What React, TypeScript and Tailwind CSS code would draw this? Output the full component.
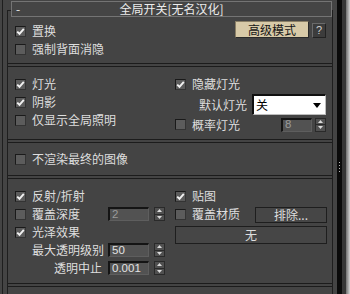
import React from "react";

const Check = ({ checked }: { checked?: boolean }) => (
  <div className="flex h-[11px] w-[11px] shrink-0 items-center justify-center border border-t-[#1a1a1a] border-l-[#1a1a1a] border-r-[#343434] border-b-[#343434] bg-[#5c5c5c]">
    {checked && (
      <svg width="9" height="9" viewBox="0 0 9 9">
        <path d="M1.2 4.6 L3.5 6.8 L7.8 1.8" stroke="#f2f2f2" strokeWidth="1.9" fill="none" />
      </svg>
    )}
  </div>
);

const CheckRow = ({ label, checked }: { label: string; checked?: boolean }) => (
  <div className="flex h-[18px] items-center gap-[6px]">
    <Check checked={checked} />
    <span className="leading-none">{label}</span>
  </div>
);

const Arrows = () => (
  <div className="flex h-[14px] w-[11px] shrink-0 flex-col border border-[#2a2a2a] bg-[#505050]">
    <div className="flex flex-1 items-center justify-center border-b border-[#2a2a2a]">
      <svg width="5" height="3" viewBox="0 0 5 3">
        <path d="M0 3 L2.5 0 L5 3Z" fill="#dadada" />
      </svg>
    </div>
    <div className="flex flex-1 items-center justify-center">
      <svg width="5" height="3" viewBox="0 0 5 3">
        <path d="M0 0 L5 0 L2.5 3Z" fill="#dadada" />
      </svg>
    </div>
  </div>
);

const Field = ({ value, wide, dim }: { value: string; wide?: boolean; dim?: boolean }) => (
  <div
    className={
      (wide ? "w-[41px] " : "w-[31px] ") +
      "flex h-[14px] items-center border-t-2 border-l-2 border-r border-b border-t-[#141414] border-l-[#141414] border-r-[#5e5e5e] border-b-[#5e5e5e] bg-[#525252] pl-[2px] font-['Liberation_Sans',sans-serif] text-[11.5px] leading-none " +
      (dim ? "text-[#9a9a9a]" : "text-[#e2e2e2]")
    }
  >
    {value}
  </div>
);

const Sep = () => <div className="h-[4px] shrink-0 border-y border-[#1c1c1c]" />;

export default function App() {
  return (
    <div className="flex h-[294px] w-[350px] overflow-hidden bg-[#444444] font-['Noto_Sans_CJK_SC',sans-serif] text-[12px] text-[#dedede]">
      <div className="w-[2px]" />
      <div className="w-px bg-[#1e1e1e]" />
      <div className="w-[4px]" />
      {/* panel */}
      <div className="flex w-[326px] flex-col">
        {/* title row */}
        <div className="flex h-[17px] shrink-0">
          <div className="h-[7px] w-[4px] self-end border-l border-t border-[#1e1e1e]" />
          <div className="mt-[1px] flex h-[16px] w-[321px] items-center border border-[#747474] bg-[#454545] text-[#ececec]">
            <div className="w-[14px] pl-[4px] leading-none">-</div>
            <div className="flex-1 text-center leading-none">全局开关[无名汉化]</div>
            <div className="w-[14px]" />
          </div>
          <div className="h-[7px] w-px self-end bg-[#1e1e1e]" />
        </div>
        {/* body */}
        <div className="flex flex-1 flex-col border-x border-[#1e1e1e]">
          {/* section 1 */}
          <div className="flex h-[46px] shrink-0 justify-between">
            <div className="flex flex-col pl-[7px] pt-[5px]">
              <CheckRow label="置换" checked />
              <CheckRow label="强制背面消隐" />
            </div>
            <div className="flex items-end gap-[3px] pr-[6px] pt-[4px] self-start">
              <div className="flex h-[17px] w-[74px] items-center justify-center border border-[#8a7f66] border-r-[#2a2a2a] border-b-[#2a2a2a] bg-[#d8caa8] leading-none text-[#151515]">
                高级模式
              </div>
              <div className="flex h-[15px] w-[14px] items-center justify-center border border-t-[#6a6a6a] border-l-[#6a6a6a] border-r-[#222] border-b-[#222] bg-[#3c3c3c] font-['Liberation_Sans',sans-serif] text-[11px] leading-none text-[#cfcfcf]">
                ?
              </div>
            </div>
          </div>
          <Sep />
          {/* section 2 */}
          <div className="flex h-[72px] shrink-0">
            <div className="flex w-[167px] flex-col pl-[7px] pt-[8px]">
              <CheckRow label="灯光" checked />
              <CheckRow label="阴影" checked />
              <CheckRow label="仅显示全局照明" />
            </div>
            <div className="flex flex-1 flex-col pt-[8px] pr-[6px]">
              <CheckRow label="隐藏灯光" checked />
              <div className="mt-[1px] flex h-[21px] items-center justify-end gap-[5px]">
                <span className="leading-none">默认灯光</span>
                <div className="flex h-[21px] w-[74px] items-center justify-between border-t-2 border-l-2 border-r border-b border-t-[#101010] border-l-[#101010] border-r-[#bdbdbd] border-b-[#bdbdbd] bg-white pl-[2px] pr-[4px] leading-none text-black">
                  <span>关</span>
                  <svg width="8" height="5" viewBox="0 0 8 5">
                    <path d="M0 0 L8 0 L4 5Z" fill="#000" />
                  </svg>
                </div>
              </div>
              <div className="mt-[2px] flex h-[15px] items-center">
                <div className="flex items-center gap-[6px]">
                  <Check />
                  <span className="leading-none">概率灯光</span>
                </div>
                <div className="ml-auto flex items-center gap-[3px]">
                  <Field value="8" dim />
                  <Arrows />
                </div>
              </div>
            </div>
          </div>
          <Sep />
          {/* section 3 */}
          <div className="flex h-[32px] shrink-0 flex-col pl-[7px] pt-[7px]">
            <CheckRow label="不渲染最终的图像" />
          </div>
          <Sep />
          {/* section 4 */}
          <div className="flex h-[104px] shrink-0">
            <div className="flex w-[167px] flex-col pl-[7px] pt-[8px]">
              <CheckRow label="反射/折射" checked />
              <div className="flex h-[18px] items-center">
                <div className="flex w-[93px] items-center gap-[6px]">
                  <Check />
                  <span className="leading-none">覆盖深度</span>
                </div>
                <Field value="2" wide dim />
                <div className="w-[5px]" />
                <Arrows />
              </div>
              <CheckRow label="光泽效果" checked />
              <div className="flex h-[18px] items-center">
                <div className="flex w-[93px] justify-end pr-[4px] leading-none">最大透明级别</div>
                <Field value="50" wide />
                <div className="w-[5px]" />
                <Arrows />
              </div>
              <div className="flex h-[18px] items-center">
                <div className="flex w-[93px] justify-end pr-[6px] leading-none">透明中止</div>
                <Field value="0.001" wide />
                <div className="w-[5px]" />
                <Arrows />
              </div>
            </div>
            <div className="flex flex-1 flex-col pr-[5px] pt-[8px]">
              <CheckRow label="贴图" checked />
              <div className="flex h-[18px] items-center">
                <div className="flex items-center gap-[6px]">
                  <Check />
                  <span className="leading-none">覆盖材质</span>
                </div>
                <div className="ml-auto mt-[2px] flex h-[16px] w-[72px] items-center justify-center border border-[#1e1e1e] bg-[#464646] leading-none">
                  排除...
                </div>
              </div>
              <div className="mt-[3px] flex h-[18px] items-center justify-center border border-[#1e1e1e] bg-[#464646] leading-none">
                无
              </div>
            </div>
          </div>
          <Sep />
          <div className="flex-1" />
        </div>
      </div>
      <div className="w-[4px]" />
      <div className="flex w-[5px] flex-col items-center gap-[2px] bg-[#0a0a0a] pt-[162px]">
        <div className="h-px w-px bg-[#bbbbbb]" />
        <div className="h-px w-px bg-[#bbbbbb]" />
        <div className="h-px w-px bg-[#bbbbbb]" />
        <div className="h-px w-px bg-[#bbbbbb]" />
      </div>
      <div className="w-[4px] bg-[#363636]" />
      <div className="w-[4px] bg-gradient-to-r from-[#707070] to-[#d4d4d4]" />
    </div>
  );
}
